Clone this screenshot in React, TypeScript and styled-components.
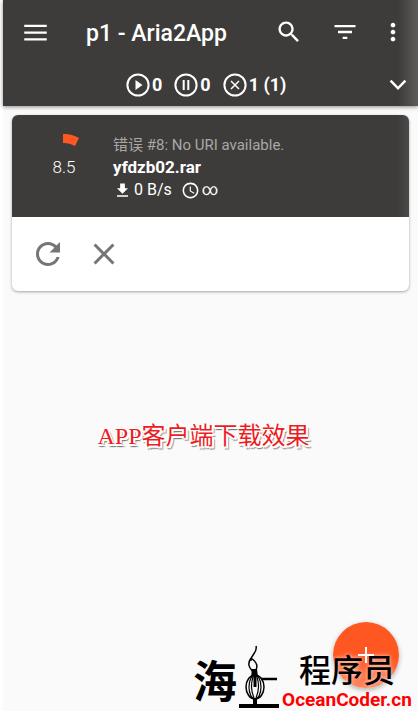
import React from "react";
import styled, { createGlobalStyle } from "styled-components";

const dark = "#3e3c3a";
const accent = "#ff5722";
const sans = `Roboto, "Noto Sans CJK SC", sans-serif`;

const GlobalStyle = createGlobalStyle`
  * { box-sizing: border-box; }
  body { margin: 0; background: #fff; font-family: ${sans}; }
  button { border: 0; padding: 0; background: none; color: inherit; font: inherit; cursor: pointer; }
`;

const Page = styled.div`
  position: relative;
  display: flex;
  flex-direction: column;
  min-height: 100vh;
  margin-left: 3px;
  background: #fafafa;
`;

const Header = styled.header`
  color: #fff;
  background: linear-gradient(to left, #5c5b59, ${dark} 20px);
  box-shadow: 0 1px 4px rgba(0, 0, 0, 0.45);
`;

const Toolbar = styled.div`
  display: flex;
  align-items: center;
  height: 64px;
  padding: 0 11px 0 18px;
`;

const Title = styled.h1`
  flex: 1;
  margin: 3px 0 0 37px;
  font-size: 23px;
  line-height: 28px;
  font-weight: 500;
  white-space: nowrap;
`;

const IconButton = styled.button<{ $size: number }>`
  display: grid;
  place-items: center;
  width: ${(p) => p.$size}px;
  height: ${(p) => p.$size}px;
`;

const Actions = styled.div`
  display: flex;
  align-items: center;
  gap: 28px;
`;

const MoreButton = styled(IconButton)`
  margin-left: -8px;
`;

const StatusBar = styled.div`
  display: flex;
  align-items: center;
  height: 42px;
  padding: 0 6px 0 122px;
`;

const Counters = styled.div`
  display: flex;
  flex: 1;
  gap: 11px;
`;

const Counter = styled.span`
  display: flex;
  align-items: center;
  gap: 1px;
  font-size: 18px;
  line-height: 26px;
  font-weight: 700;
`;

const Card = styled.article`
  margin: 9px 9px 0;
  border-radius: 6px;
  overflow: hidden;
  background: #fff;
  box-shadow: 0 1px 3px rgba(0, 0, 0, 0.35);
`;

const Summary = styled.div`
  display: flex;
  height: 102px;
  padding: 18px 0 0 29px;
  color: #fff;
  background: linear-gradient(to left, #4b4a48, ${dark} 12px);
`;

const Progress = styled.div`
  display: flex;
  flex-direction: column;
  align-items: center;
  width: 46px;
  margin-right: 26px;
  font-size: 17px;
  line-height: 20px;
  font-weight: 300;
`;

const Details = styled.div`
  min-width: 0;
  white-space: nowrap;
`;

const ErrorText = styled.p`
  margin: 0;
  font-size: 15px;
  line-height: 24px;
  color: #a9a8a7;
`;

const FileName = styled.h2`
  margin: 0;
  font-size: 17px;
  line-height: 20px;
  font-weight: 700;
`;

const Transfer = styled.div`
  display: flex;
  align-items: center;
  font-size: 16px;
  line-height: 26px;
`;

const Rate = styled.span`
  margin: 0 9px 0 2px;
`;

const Remaining = styled.span`
  margin-left: 2px;
`;

const CardActions = styled.div`
  display: flex;
  gap: 20px;
  padding: 19px 18px;
  color: #757575;
`;

const Caption = styled.p`
  margin: 127px 0 0;
  padding-right: 14px;
  text-align: center;
  font-family: "Liberation Serif", "Noto Sans CJK SC", serif;
  font-size: 24px;
  line-height: 36px;
  color: #ed1c24;
  text-shadow: -1px 0 #fff, 1px 0 #fff, 0 -1px #fff, 0 2px #fff, 2px 2px #fff, -2px 1px #fff,
    1px 3px 1px #777, 3px 3px 1px #999;
`;

const Fab = styled.button`
  position: absolute;
  right: 19px;
  bottom: 23px;
  display: grid;
  place-items: center;
  width: 66px;
  height: 66px;
  border-radius: 50%;
  color: #fff;
  background: linear-gradient(${accent} 55%, #ff8660);
  box-shadow: 0 2px 5px rgba(0, 0, 0, 0.3);
`;

const Brand = styled.footer`
  position: absolute;
  right: 5px;
  bottom: 0;
  display: flex;
  align-items: flex-end;
  color: #000;
  pointer-events: none;
`;

const BrandSea = styled.span`
  font-family: "Noto Sans CJK SC", sans-serif;
  font-size: 44px;
  line-height: 64px;
  font-weight: 700;
`;

const BrandWords = styled.div`
  display: flex;
  flex-direction: column;
  align-items: center;
  width: 132px;
`;

const BrandName = styled.span`
  font-family: "Noto Sans CJK SC", sans-serif;
  font-size: 32px;
  line-height: 42px;
  font-weight: 500;
  text-shadow: 0 0 4px rgba(255, 255, 255, 0.8);
`;

const BrandDomain = styled.span`
  font-family: Roboto, sans-serif;
  font-size: 19px;
  line-height: 22px;
  font-weight: 700;
  color: #f00;
`;

type GlyphProps = { size: number; d: string };
const Glyph = ({ size, d }: GlyphProps) => (
  <svg width={size} height={size} viewBox="0 0 24 24" fill="currentColor" aria-hidden="true">
    <path d={d} />
  </svg>
);

const paths = {
  menu: "M2 5h20v2H2zM2 11h20v2H2zM2 17h20v2H2z",
  search:
    "M15.5 14h-.79l-.28-.27C15.41 12.59 16 11.11 16 9.5 16 5.91 13.09 3 9.5 3S3 5.91 3 9.5 5.91 16 9.5 16c1.61 0 3.09-.59 4.23-1.57l.27.28v.79l5 4.99L20.49 19l-4.99-5zm-6 0C7.01 14 5 11.99 5 9.5S7.01 5 9.5 5 14 7.01 14 9.5 11.99 14 9.5 14z",
  filter: "M10 18h4v-2h-4v2zM3 6v2h18V6H3zm3 7h12v-2H6v2z",
  more: "M12 8c1.1 0 2-.9 2-2s-.9-2-2-2-2 .9-2 2 .9 2 2 2zm0 2c-1.1 0-2 .9-2 2s.9 2 2 2 2-.9 2-2-.9-2-2-2zm0 6c-1.1 0-2 .9-2 2s.9 2 2 2 2-.9 2-2-.9-2-2-2z",
  expand: "M17.6 7.6L12 13.2 6.4 7.6 4.9 9.1l7.1 7.1 7.1-7.1z",
  download: "M19 9h-4V3H9v6H5l7 7 7-7zM5 18v2h14v-2H5z",
  clock:
    "M11.99 2C6.47 2 2 6.48 2 12s4.47 10 9.99 10C17.52 22 22 17.52 22 12S17.52 2 11.99 2zM12 20c-4.42 0-8-3.58-8-8s3.58-8 8-8 8 3.58 8 8-3.58 8-8 8zm.5-13H11v6l5.25 3.15.75-1.23-4.5-2.67z",
  refresh:
    "M17.65 6.35C16.2 4.9 14.21 4 12 4c-4.42 0-7.99 3.58-7.99 8s3.57 8 7.99 8c3.73 0 6.84-2.55 7.73-6h-2.08c-.82 2.33-3.04 4-5.65 4-3.31 0-6-2.69-6-6s2.69-6 6-6c1.66 0 3.14.69 4.22 1.78L13 11h7V4l-2.35 2.35z",
  close:
    "M19 6.41L17.59 5 12 10.59 6.41 5 5 6.41 10.59 12 5 17.59 6.41 19 12 13.41 17.59 19 19 17.59 13.41 12z",
};

const StatusIcon = ({ kind }: { kind: "play" | "pause" | "error" }) => (
  <svg width="26" height="26" viewBox="0 0 26 26" fill="none" stroke="currentColor" aria-hidden="true">
    <circle cx="13" cy="13" r="10.6" strokeWidth="2" />
    {kind === "play" && <path d="M10.5 8v10l7-5z" fill="currentColor" stroke="none" />}
    {kind === "pause" && <path d="M10.7 8v10M15.3 8v10" strokeWidth="2" />}
    {kind === "error" && <path d="M9 9l8 8M17 9l-8 8" strokeWidth="1.5" />}
  </svg>
);

const ProgressArc = () => (
  <svg width="46" height="24" viewBox="0 0 46 24" aria-hidden="true">
    <path d="M22 1Q30 .5 38 5L34 13Q28 9.500 22 10Z" fill={accent} />
  </svg>
);

const Lantern = () => (
  <svg width="44" height="66" viewBox="-2 0 44 66" fill="none" stroke="#000" aria-hidden="true">
    <path d="M17 1c2 7-6 9-5 15" strokeWidth="1.5" />
    <path d="M12 13c-4 6-2 9 2 14M12 13c7 5 7 9 4 14" strokeWidth="1.5" />
    <path d="M13 24h5l1 8h-7z" fill="#000" stroke="none" />
    <ellipse cx="16" cy="42" rx="9" ry="12" strokeWidth="1.5" />
    <ellipse cx="16" cy="42" rx="6" ry="12" strokeWidth="1.2" />
    <path d="M16 28v14" strokeWidth="3" />
    <path d="M14 32c-2 6-2 14 1 21M18 32c2 6 2 14-1 21" strokeWidth="1.2" />
    <path d="M16 53v9" strokeWidth="4" />
    <path d="M22 34h16" strokeWidth="2.5" />
    <path d="M0 61h40" strokeWidth="4" />
  </svg>
);

export default function App() {
  return (
    <>
      <GlobalStyle />
      <Page>
        <Header>
          <Toolbar>
            <IconButton $size={28} aria-label="Menu"><Glyph size={27} d={paths.menu} /></IconButton>
            <Title>p1 - Aria2App</Title>
            <Actions>
              <IconButton $size={28} aria-label="Search"><Glyph size={28} d={paths.search} /></IconButton>
              <IconButton $size={28} aria-label="Filter"><Glyph size={28} d={paths.filter} /></IconButton>
              <MoreButton $size={28} aria-label="More options"><Glyph size={28} d={paths.more} /></MoreButton>
            </Actions>
          </Toolbar>
          <StatusBar>
            <Counters>
              <Counter><StatusIcon kind="play" />0</Counter>
              <Counter><StatusIcon kind="pause" />0</Counter>
              <Counter><StatusIcon kind="error" />1 (1)</Counter>
            </Counters>
            <IconButton $size={28} aria-label="Expand"><Glyph size={28} d={paths.expand} /></IconButton>
          </StatusBar>
        </Header>
        <main>
          <Card>
            <Summary>
              <Progress><ProgressArc />8.5</Progress>
              <Details>
                <ErrorText>错误 #8: No URI available.</ErrorText>
                <FileName>yfdzb02.rar</FileName>
                <Transfer>
                  <Glyph size={19} d={paths.download} />
                  <Rate>0 B/s</Rate>
                  <Glyph size={19} d={paths.clock} />
                  <Remaining>∞</Remaining>
                </Transfer>
              </Details>
            </Summary>
            <CardActions>
              <IconButton $size={36} aria-label="Restart"><Glyph size={36} d={paths.refresh} /></IconButton>
              <IconButton $size={36} aria-label="Remove"><Glyph size={36} d={paths.close} /></IconButton>
            </CardActions>
          </Card>
          <Caption>APP客户端下载效果</Caption>
        </main>
        <Fab aria-label="Add download">
          <svg width="18" height="18" viewBox="0 0 18 18" stroke="currentColor" strokeWidth="2" aria-hidden="true">
            <path d="M9 1v16M1 9h16" />
          </svg>
        </Fab>
        <Brand>
          <BrandSea>海</BrandSea>
          <Lantern />
          <BrandWords>
            <BrandName>程序员</BrandName>
            <BrandDomain>OceanCoder.cn</BrandDomain>
          </BrandWords>
        </Brand>
      </Page>
    </>
  );
}
